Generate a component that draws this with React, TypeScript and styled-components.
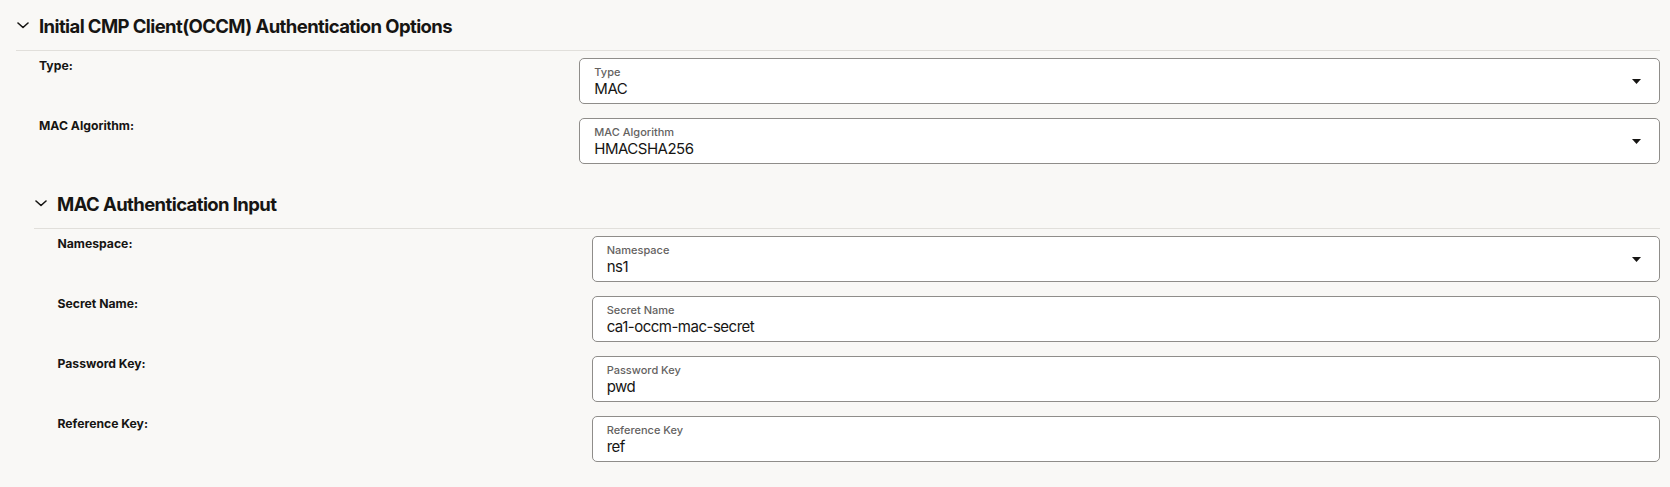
import React from "react";
import styled, { createGlobalStyle } from "styled-components";

const GlobalStyle = createGlobalStyle`
  html, body {
    margin: 0;
    padding: 0;
    background: #f9f8f6;
    font-family: Inter, "Noto Sans", "Liberation Sans", sans-serif;
    color: #161513;
  }
`;

const Page = styled.div`
  padding: 0 10px 0 16px;
`;

interface SectionProps {
  nested?: boolean;
}

const Section = styled.section<SectionProps>`
  margin-left: ${({ nested }) => (nested ? "18px" : "0")};
`;

const SectionHeader = styled.div`
  display: flex;
  align-items: center;
  gap: 10px;
  height: 51px;
  padding: 1px 0 0 1px;
  box-sizing: border-box;
  border-bottom: 1px solid #e1dfdb;
  margin-bottom: 7px;
`;

const Title = styled.h2`
  margin: 0;
  font-size: 18.5px;
  font-weight: 700;
  letter-spacing: -0.6px;
  line-height: 24px;
  color: #161513;
`;

const Row = styled.div<SectionProps>`
  display: grid;
  grid-template-columns: 1fr 2fr;
  padding-left: ${({ nested }) => (nested ? "23.5px" : "23px")};
  margin-bottom: 14px;
  min-height: 46px;
`;

const RowLabel = styled.div`
  font-size: 12.2px;
  font-weight: 700;
  line-height: 16px;
  color: #161513;
`;

const Field = styled.div`
  display: flex;
  align-items: center;
  height: 46px;
  box-sizing: border-box;
  background: #ffffff;
  border: 1px solid #8f8d8a;
  border-radius: 5px;
  padding: 0 18px 0 14px;
`;

const FieldText = styled.div`
  flex: 1;
  display: flex;
  flex-direction: column;
  padding-top: 1px;
`;

const FieldLabel = styled.span`
  font-size: 11px;
  line-height: 13px;
  font-weight: 500;
  color: #64625f;
`;

const FieldValue = styled.span`
  font-size: 15px;
  line-height: 19px;
  color: #161513;
  letter-spacing: -0.5px;
`;

const Chevron = () => (
  <svg width="12" height="7" viewBox="0 0 12 7" fill="none">
    <path d="M1 1l5 4.5L11 1" stroke="#161513" strokeWidth="1.6" strokeLinecap="round" strokeLinejoin="round" />
  </svg>
);

const Caret = () => (
  <svg width="9" height="5" viewBox="0 0 9 5">
    <path d="M0 0h9L4.5 5z" fill="#161513" />
  </svg>
);

interface FormItem {
  label: string;
  value: string;
  select?: boolean;
}

const optionsItems: FormItem[] = [
  { label: "Type", value: "MAC", select: true },
  { label: "MAC Algorithm", value: "HMACSHA256", select: true },
];

const macItems: FormItem[] = [
  { label: "Namespace", value: "ns1", select: true },
  { label: "Secret Name", value: "ca1-occm-mac-secret" },
  { label: "Password Key", value: "pwd" },
  { label: "Reference Key", value: "ref" },
];

function FormRow({ item, nested }: { item: FormItem; nested?: boolean }) {
  return (
    <Row nested={nested}>
      <RowLabel>{item.label}:</RowLabel>
      <Field>
        <FieldText>
          <FieldLabel>{item.label}</FieldLabel>
          <FieldValue>{item.value}</FieldValue>
        </FieldText>
        {item.select && <Caret />}
      </Field>
    </Row>
  );
}

export default function App() {
  return (
    <>
      <GlobalStyle />
      <Page>
        <Section>
          <SectionHeader>
            <Chevron />
            <Title>Initial CMP Client(OCCM) Authentication Options</Title>
          </SectionHeader>
          {optionsItems.map((item) => (
            <FormRow key={item.label} item={item} />
          ))}
          <Section nested>
            <SectionHeader>
              <Chevron />
              <Title>MAC Authentication Input</Title>
            </SectionHeader>
            {macItems.map((item) => (
              <FormRow key={item.label} item={item} nested />
            ))}
          </Section>
        </Section>
      </Page>
    </>
  );
}
